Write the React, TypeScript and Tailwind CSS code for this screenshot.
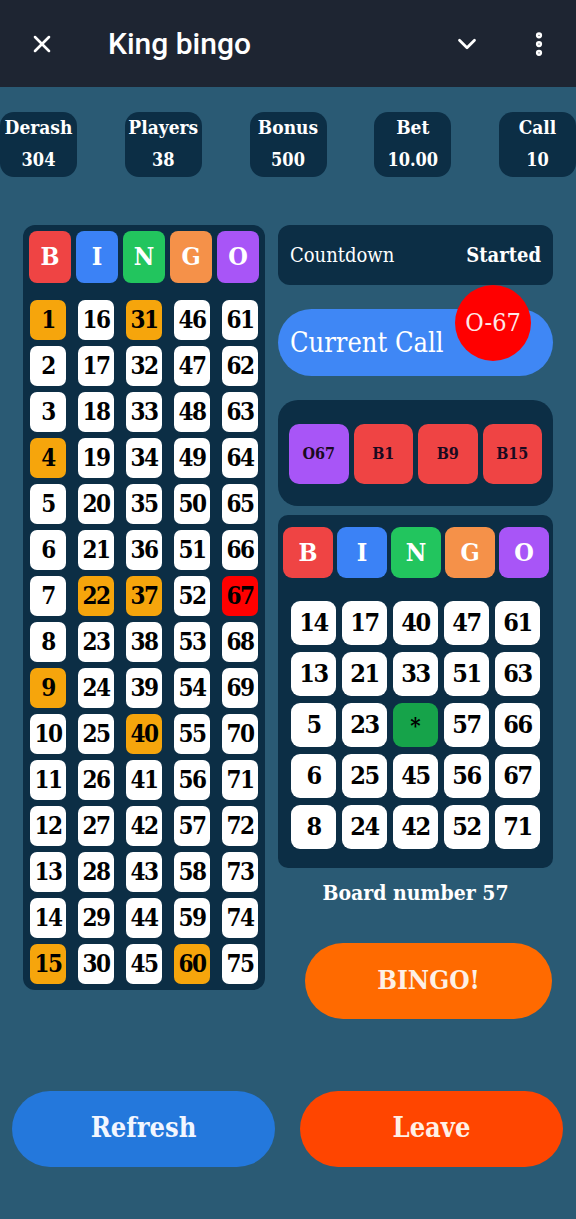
import { X, ChevronDown, EllipsisVertical } from "lucide-react";

const serif = "font-['DejaVu_Serif_Condensed','DejaVu_Serif',serif]";

const stats = [
  { label: "Derash", value: "304" },
  { label: "Players", value: "38" },
  { label: "Bonus", value: "500" },
  { label: "Bet", value: "10.00" },
  { label: "Call", value: "10" },
];

const letters = [
  { l: "B", bg: "bg-[#ef4444]" },
  { l: "I", bg: "bg-[#3b82f6]" },
  { l: "N", bg: "bg-[#22c55e]" },
  { l: "G", bg: "bg-[#f59149]" },
  { l: "O", bg: "bg-[#a855f7]" },
];

const called = [1, 4, 9, 15, 22, 31, 37, 40, 60];
const current = 67;

const card = [
  [14, 17, 40, 47, 61],
  [13, 21, 33, 51, 63],
  [5, 23, 0, 57, 66],
  [6, 25, 45, 56, 67],
  [8, 24, 42, 52, 71],
];

const recent = [
  { t: "O67", bg: "bg-[#a855f7]" },
  { t: "B1", bg: "bg-[#ef4444]" },
  { t: "B9", bg: "bg-[#ef4444]" },
  { t: "B15", bg: "bg-[#ef4444]" },
];

const App = () => {
  // master board: rows of 1..15, 16..30 etc.
  const rows = Array.from({ length: 15 }, (_, r) => [0, 1, 2, 3, 4].map((c) => c * 15 + r + 1));

  const cellColor = (n: number) => {
    if (n === current) return "bg-[#ff0000]";
    if (called.includes(n)) return "bg-[#f6a50c]";
    return "bg-white";
  };

  return (
    <div className={`min-h-[1219px] w-[576px] bg-[#2a5a74] ${serif} overflow-hidden`}>
      {/* Header */}
      <header className="h-[87px] bg-[#1e2532] flex items-center text-white">
        <X className="ml-[28px] h-[28px] w-[28px]" strokeWidth={2.2} />
        <span className="ml-[52px] font-['Roboto',sans-serif] text-[30px] font-medium">King bingo</span>
        <ChevronDown className="ml-auto h-[30px] w-[30px]" strokeWidth={2.2} />
        <EllipsisVertical className="ml-[42px] mr-[22px] h-[30px] w-[30px]" strokeWidth={3} />
      </header>

      {/* Stats */}
      <div className="mt-[25px] flex justify-between">
        {stats.map((s) => (
          <div key={s.label} className="w-[77px] h-[65px] rounded-[14px] bg-[#0c2e45] flex flex-col items-center pt-[4px] text-white font-bold">
            <span className="text-[19px] leading-[22px]">{s.label}</span>
            <span className="mt-[12px] text-[18px] leading-[20px]">{s.value}</span>
          </div>
        ))}
      </div>

      <div className="mt-[48px] flex pl-[23px] gap-[13px]">
        {/* Master board */}
        <div className="w-[242px] rounded-[12px] bg-[#0c2e45] pt-[6px] pb-[6px] h-fit">
          <div className="flex gap-[5px] px-[6px]">
            {letters.map((x) => (
              <div key={x.l} className={`${x.bg} w-[42px] h-[52px] rounded-[8px] flex items-center justify-center text-white text-[25px] font-bold`}>
                {x.l}
              </div>
            ))}
          </div>
          <div className="mt-[17px] grid grid-cols-[repeat(5,36px)] gap-x-[12px] gap-y-[6px] px-[7px]">
            {rows.flat().map((n) => (
              <div key={n} className={`${cellColor(n)} h-[40px] rounded-[7px] flex items-center justify-center text-black text-[24px] font-bold tracking-[-1.5px]`}>
                {n}
              </div>
            ))}
          </div>
        </div>

        {/* Right column */}
        <div className="w-[275px] flex flex-col">
          <div className="h-[60px] rounded-[12px] bg-[#0c2e45] flex items-center justify-between px-[12px] text-white text-[20px]">
            <span>Countdown</span>
            <span className="font-bold">Started</span>
          </div>

          <div className="relative mt-[24px] h-[67px] rounded-full bg-[#3f87f5] flex items-center pl-[12px] text-white text-[27px]">
            <span className="mt-[2px]">Current Call</span>
            <div className="absolute left-[177px] top-[-24px] w-[76px] h-[76px] rounded-full bg-[#ff0000] flex items-center justify-center text-[25px] text-[#fde8e8]">
              O-67
            </div>
          </div>

          <div className="mt-[24px] h-[106px] rounded-[20px] bg-[#0c2e45] grid grid-cols-4 gap-[5px] px-[11px] pt-[24px]">
            {recent.map((r) => (
              <div key={r.t} className={`${r.bg} h-[60px] rounded-[10px] flex items-center justify-center text-[#1a0a20] text-[16px] font-bold`}>
                {r.t}
              </div>
            ))}
          </div>

          <div className="mt-[9px] rounded-[10px] bg-[#0c2e45] pt-[12px] pb-[19px]">
            <div className="flex gap-[4px] pl-[5px]">
              {letters.map((x) => (
                <div key={x.l} className={`${x.bg} w-[50px] h-[51px] rounded-[9px] flex items-center justify-center text-white text-[25px] font-bold`}>
                  {x.l}
                </div>
              ))}
            </div>
            <div className="mt-[23px] grid grid-cols-[repeat(5,45px)] gap-x-[6px] gap-y-[7px] pl-[13px]">
              {card.flat().map((n, i) =>
                n === 0 ? (
                  <div key={i} className="h-[44px] rounded-[9px] bg-[#16a34a] flex items-start justify-center pt-[6px] text-black text-[22px] font-bold">
                    *
                  </div>
                ) : (
                  <div key={i} className="h-[44px] rounded-[9px] bg-white flex items-center justify-center text-black text-[25px] font-bold tracking-[-1.5px]">
                    {n}
                  </div>
                )
              )}
            </div>
          </div>

          <div className="mt-[9px] text-center text-white text-[21px] font-bold">Board number 57</div>

          <button className="mt-[34px] ml-[27px] w-[247px] h-[76px] rounded-full bg-[#ff6a00] text-[#fdf0e6] text-[26px] font-bold">
            BINGO!
          </button>
        </div>
      </div>

      {/* Bottom actions */}
      <div className="mt-[72px] flex gap-[25px] px-[12px]">
        <button className="w-[263px] h-[76px] rounded-full bg-[#2478dc] text-[#f2f6ff] text-[27px] font-bold">Refresh</button>
        <button className="w-[263px] h-[76px] rounded-full bg-[#ff4500] text-[#fff0e6] text-[27px] font-bold">Leave</button>
      </div>
    </div>
  );
};

export default App;
